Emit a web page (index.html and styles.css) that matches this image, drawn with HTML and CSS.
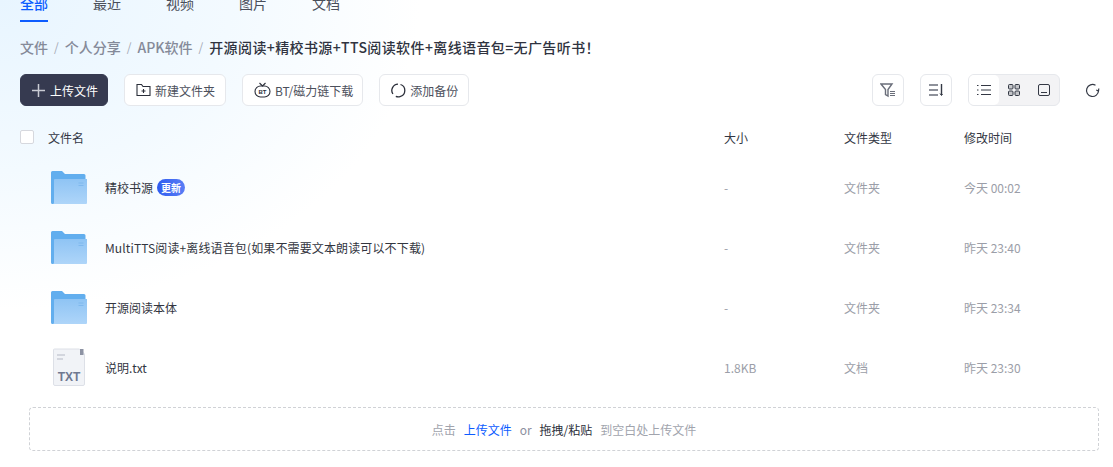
FILE: index.html
```html
<!DOCTYPE html>
<html lang="zh">

<head>
  <meta charset="UTF-8">
  <title>文件</title>
  <link rel="stylesheet" href="styles.css">
</head>

<body>
  <div class="tabs">
    <a class="tab active">全部</a>
    <a class="tab">最近</a>
    <a class="tab">视频</a>
    <a class="tab">图片</a>
    <a class="tab">文档</a>
  </div>

  <div class="crumbs">
    <span>文件</span><i>/</i>
    <span>个人分享</span><i>/</i>
    <span>APK软件</span><i>/</i>
    <b>开源阅读+精校书源+TTS阅读软件+离线语音包=无广告听书！</b>
  </div>

  <div class="toolbar">
    <button class="btn primary">
      <svg width="13" height="13" viewBox="0 0 13 13"><path d="M6.500 0v13M0 6.500h13" stroke="#c9cbd3" stroke-width="1.500" fill="none"/></svg>
      上传文件
    </button>
    <button class="btn">
      <svg width="15" height="14" viewBox="0 0 15 14" fill="none" stroke="#2b2f3a" stroke-width="1.100"><path d="M1 3V12.500H14V3.500H7L5.500 1.500H1Z"/><path d="M7.500 6v4M5.500 8h4"/></svg>
      新建文件夹
    </button>
    <button class="btn">
      <svg width="17" height="16" viewBox="0 0 17 16" fill="none" stroke="#2b2f3a" stroke-width="1.100"><rect x="1" y="4" width="15" height="11" rx="5.500"/><path d="M5.500 1l3 3 3-3"/><text x="8.500" y="12" class="bt-mark">BT</text></svg>
      BT/磁力链下载
    </button>
    <button class="btn">
      <svg width="15" height="15" viewBox="0 0 15 15" fill="none" stroke="#2b2f3a" stroke-width="1.300"><path d="M1.900 11A6.300 6.300 0 0 1 7 1.200"/><path d="M9.500 1.500A6.300 6.300 0 0 1 9 13.600a6.300 6.300 0 0 1-4.200 -.3"/></svg>
      添加备份
    </button>

    <div class="tool-right">
      <button class="btn square">
        <svg width="16" height="16" viewBox="0 0 16 16" fill="none" stroke="#6a6e7a" stroke-width="1.400"><path d="M1 2h11L8 7.500V14L5.500 12.500V7.500Z"/><path d="M10 9.500h5M10 11.500h5M10 13.500h5" stroke-width="1"/></svg>
      </button>
      <button class="btn square">
        <svg width="16" height="16" viewBox="0 0 16 16" fill="none" stroke="#6a6e7a" stroke-width="1.400"><path d="M1 3h9M1 8h9M1 13h9"/><path d="M13.500 2v11" stroke="#333844"/><path d="M12 11.500l1.500 2 1-1.500" stroke="#333844" stroke-width="1"/></svg>
      </button>
      <div class="views">
        <span class="view on">
          <svg width="14" height="12" viewBox="0 0 14 12" stroke="#333844" fill="none"><path d="M0 1.500h1.500M4 1.500h10M0 6h1.500M4 6h10M0 10.500h1.500M4 10.500h10"/></svg>
        </span>
        <span class="view">
          <svg width="12" height="12" viewBox="0 0 12 12" stroke="#333844" fill="#c4c5c9"><rect x=".5" y=".5" width="4.500" height="4.500" rx="1"/><rect x="7" y=".5" width="4.500" height="4.500" rx="1"/><rect x=".5" y="7" width="4.500" height="4.500" rx="1"/><rect x="7" y="7" width="4.500" height="4.500" rx="1"/></svg>
        </span>
        <span class="view">
          <svg width="12" height="12" viewBox="0 0 12 12" stroke="#333844" fill="none"><rect x=".5" y=".5" width="11" height="11" rx="1.500"/><path d="M3 8.500h6"/></svg>
        </span>
      </div>
      <svg class="refresh" width="15" height="15" viewBox="0 0 15 15" fill="none" stroke="#333844" stroke-width="1.200"><path d="M13.500 7.500A6 6 0 1 1 10.500 2.300"/><path d="M13.800 5.500l-.3 2.500-2.300-1"/></svg>
    </div>
  </div>

  <div class="row head">
    <div class="name-col"><span class="check"></span>文件名</div>
    <div class="size">大小</div>
    <div class="type">文件类型</div>
    <div class="time">修改时间</div>
  </div>

  <div class="row item">
    <div class="name-col">
      <svg class="folder" width="36" height="34" viewBox="0 0 36 34"><use href="#folder-shape"/></svg>
      精校书源 <em class="tag">更新</em>
    </div>
    <div class="size">-</div>
    <div class="type">文件夹</div>
    <div class="time">今天 00:02</div>
  </div>
  <div class="row item">
    <div class="name-col long">
      <svg class="folder" width="36" height="34" viewBox="0 0 36 34"><use href="#folder-shape"/></svg>
      MultiTTS阅读+离线语音包(如果不需要文本朗读可以不下载)
    </div>
    <div class="size">-</div>
    <div class="type">文件夹</div>
    <div class="time">昨天 23:40</div>
  </div>
  <div class="row item">
    <div class="name-col">
      <svg class="folder" width="36" height="34" viewBox="0 0 36 34"><use href="#folder-shape"/></svg>
      开源阅读本体
    </div>
    <div class="size">-</div>
    <div class="type">文件夹</div>
    <div class="time">昨天 23:34</div>
  </div>
  <div class="row item">
    <div class="name-col">
      <svg class="file" width="36" height="38" viewBox="0 0 36 38">
        <path d="M3.500 1H28.500L33.500 6V36a1.500 1.500 0 0 1-1.500 1.500H4A1.500 1.500 0 0 1 2.500 36V2A1 1 0 0 1 3.500 1Z" fill="#f1f3f7" stroke="#dde0e7"/>
        <path d="M29 1h3.500v6H29Z" fill="#8d93a3"/>
        <path d="M6 6h8v2H6ZM6 10h6v2H6Z" fill="#d3d6de"/>
        <text x="18" y="33" class="txt-mark">TXT</text>
      </svg>
      说明.txt
    </div>
    <div class="size">1.8KB</div>
    <div class="type">文档</div>
    <div class="time">昨天 23:30</div>
  </div>

  <div class="drop">
    点击<a>上传文件</a><span class="or">or</span><span class="dark">拖拽/粘贴</span>到空白处上传文件
  </div>

  <svg width="0" height="0" class="defs">
    <defs>
      <linearGradient id="folder-front" x1="0" y1="0" x2="0" y2="1">
        <stop offset="0" stop-color="#8fc4f4"/>
        <stop offset="1" stop-color="#aed5f9"/>
      </linearGradient>
      <g id="folder-shape">
        <path d="M0 1.500A1.500 1.500 0 0 1 1.500 0H11l3 3H33a1.500 1.500 0 0 1 1.500 1.500V33H1.500A1.500 1.500 0 0 1 0 31.500Z" fill="#62aeee"/>
        <path d="M1.500 33H35a1 1 0 0 0 1-1V8H4a1 1 0 0 0-1 1V31.500A1.500 1.500 0 0 1 1.500 33Z" fill="url(#folder-front)"/>
        <path d="M27.500 12h5M27.500 14.500h5" stroke="#7fb9ee" stroke-width="1"/>
      </g>
    </defs>
  </svg>
</body>

</html>
```

FILE: styles.css
```css
* {
  box-sizing: border-box;
}

html,
body {
  height: 467px;
  overflow: hidden;
}

body {
  margin: 0;
  padding: 0 14px 0 20px;
  font-family: "Noto Sans CJK SC", "Noto Sans", sans-serif;
  font-size: 12px;
  color: #2b2f3a;
  background:
    radial-gradient(ellipse 420px 310px at 0 0, #e8f5ff 0%, #f3faff 55%, #ffffff 100%) no-repeat #fff;
}

.tabs {
  display: flex;
  gap: 45px;
  height: 22px;
  align-items: flex-end;
  overflow: hidden;
}

.tab {
  display: block;
  height: 26px;
  line-height: 14px;
  font-size: 14px;
  color: #4a4e5a;
  flex: none;
  width: 28px;
}

.tab.active {
  color: #0d5cff;
  border-bottom: 2px solid #0d5cff;
  font-weight: 500;
}

.crumbs {
  display: flex;
  align-items: center;
  height: 20px;
  margin-top: 15px;
  font-size: 14px;
  line-height: 20px;
  font-weight: 500;
  color: #858a99;
}

.crumbs i {
  font-style: normal;
  font-weight: 400;
  font-size: 12px;
  color: #a4a8b4;
  margin: 0 6px;
}

.crumbs b {
  font-weight: 500;
  font-size: 14px;
  letter-spacing: .39px;
  color: #2f3340;
}

.toolbar {
  display: flex;
  align-items: center;
  gap: 16px;
  margin-top: 17px;
  height: 32px;
}

.btn {
  display: flex;
  align-items: center;
  gap: 4px;
  height: 32px;
  padding: 0 10px 0 11px;
  border: 1px solid #e6e8ec;
  border-radius: 6px;
  background: #fff;
  font: inherit;
  color: #4c505c;
  white-space: nowrap;
}

.btn svg {
  flex: none;
}

.btn:nth-child(3) {
  padding-right: 9px;
}

.btn.primary {
  width: 88px;
  gap: 5px;
  padding-right: 0;
  background: #363a50;
  border-color: #363a50;
  color: #fff;
}

.btn.square {
  width: 32px;
  padding: 0;
  justify-content: center;
}

.tool-right {
  display: flex;
  align-items: center;
  gap: 16px;
  margin-left: auto;
}

.views {
  display: flex;
  width: 92px;
  height: 32px;
  border: 1px solid #e6e8ec;
  border-radius: 6px;
  background: #f3f3f5;
}

.view {
  display: flex;
  align-items: center;
  justify-content: center;
  flex: 1;
}

.view.on {
  background: #fff;
  border-radius: 5px;
}

.refresh {
  margin: 0 -1px 0 9px;
}

.row {
  display: flex;
  align-items: center;
}

.head {
  height: 32px;
  margin-top: 15px;
  color: #333744;
}

.item {
  height: 60px;
  color: #33363f;
}

.head + .item {
  margin-top: 4px;
}

.name-col {
  display: flex;
  align-items: center;
  width: 704px;
  flex: none;
}

.item .name-col {
  padding-left: 31px;
}

.long {
  letter-spacing: .13px;
}

.check {
  width: 14px;
  height: 14px;
  margin-right: 14px;
  border: 1px solid #d6d8de;
  border-radius: 2px;
  background: #fff;
}

.folder {
  margin: 2px 18px 0 0;
  flex: none;
}

.file {
  margin-right: 18px;
  flex: none;
}

.tag {
  margin-left: 4px;
  padding: 0 4px;
  height: 17px;
  line-height: 17px;
  border-radius: 9px;
  font-style: normal;
  font-size: 10px;
  font-weight: 700;
  color: #fff;
  background: linear-gradient(90deg, #2f5cf0, #5a7df5);
}

.size,
.type {
  width: 120px;
  flex: none;
}

.item .size,
.item .type,
.item .time {
  color: #9b9ea8;
}

.drop {
  display: flex;
  align-items: center;
  justify-content: center;
  height: 44px;
  margin: 10px 0 0 9px;
  border: 1px dashed #d0d2d6;
  border-radius: 4px;
  color: #a1a4ad;
}

.drop a {
  margin: 0 8px;
  color: #0d5cff;
}

.drop .or {
  margin-right: 8px;
  color: #8d8fa0;
}

.drop .dark {
  margin-right: 8px;
  color: #2b2f3a;
}

.defs {
  position: absolute;
}

.bt-mark {
  font: 700 6px "Liberation Sans", sans-serif;
  text-anchor: middle;
  fill: #2b2f3a;
  stroke: none;
}

.txt-mark {
  font: 700 12px "Liberation Sans", sans-serif;
  text-anchor: middle;
  fill: #6f7890;
}
```
